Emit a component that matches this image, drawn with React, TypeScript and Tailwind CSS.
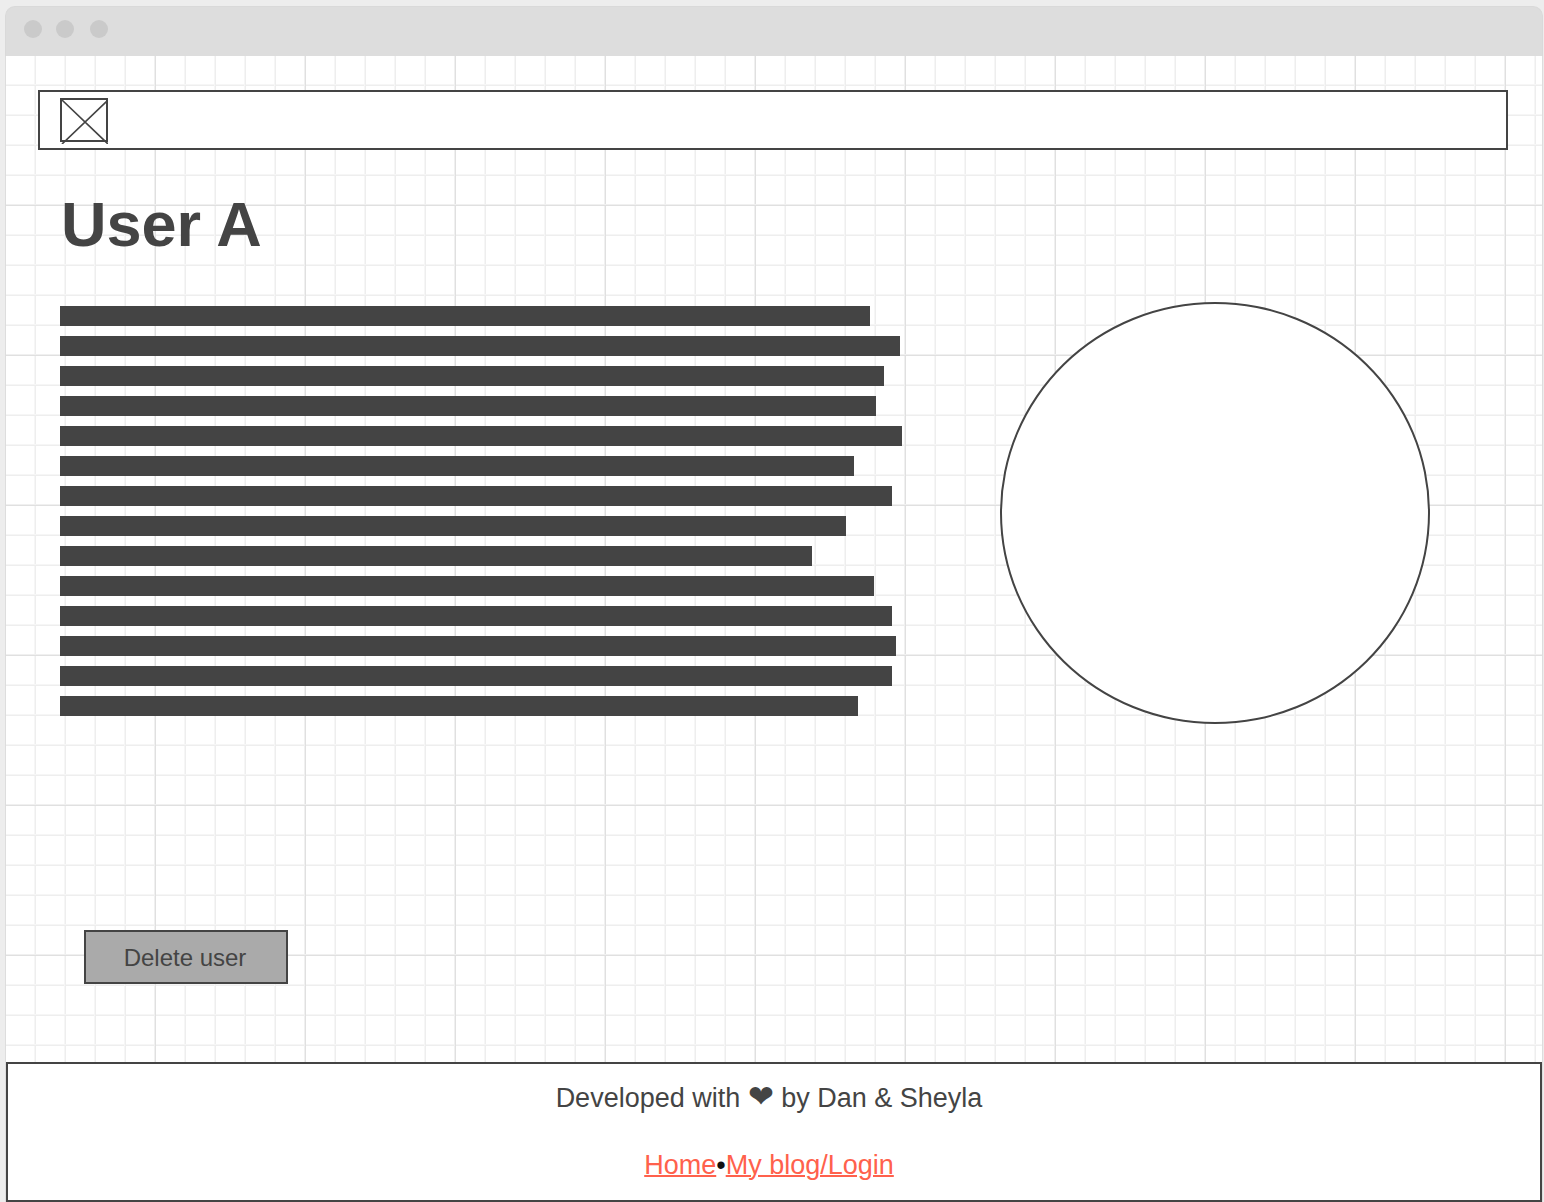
const bioLines = [810, 840, 824, 816, 842, 794, 832, 786, 752, 814, 832, 836, 832, 798];
const longestLine = Math.max(...bioLines);

function TitleBar() {
  return (
    <div className="flex h-[50px] items-start rounded-t-[10px] border border-b-0 border-[#d9d9d9] bg-[#ddd] pt-[13px] pl-[18px]">
      <span className="size-[18px] rounded-full bg-[#cacaca]" />
      <span className="ml-3.5 size-[18px] rounded-full bg-[#cacaca]" />
      <span className="ml-4 size-[18px] rounded-full bg-[#cacaca]" />
    </div>
  );
}

function GridPattern() {
  const minor = [28, 58, 88, 118];
  return (
    <svg className="absolute inset-0 size-full" aria-hidden="true" shapeRendering="crispEdges">
      <defs>
        <pattern id="grid" width="150" height="150" patternUnits="userSpaceOnUse">
          {minor.map((p) => (
            <g key={p}>
              <rect x={p} y="0" width="1" height="150" fill="#f6f6f6" />
              <rect x={p + 1} y="0" width="1" height="150" fill="#eee" />
              <rect x="0" y={p} width="150" height="1" fill="#f6f6f6" />
              <rect x="0" y={p + 1} width="150" height="1" fill="#eee" />
            </g>
          ))}
          <rect x="148" y="0" width="1" height="150" fill="#f0f0f0" />
          <rect x="149" y="0" width="1" height="150" fill="#e0e0e0" />
          <rect x="0" y="148" width="150" height="1" fill="#f0f0f0" />
          <rect x="0" y="149" width="150" height="1" fill="#e0e0e0" />
        </pattern>
      </defs>
      <rect width="100%" height="100%" fill="url(#grid)" />
    </svg>
  );
}

function Logo() {
  return (
    <svg width="48" height="46" viewBox="0 0 48 46" fill="none" stroke="#444" role="img" aria-label="Logo">
      <rect x="1" y="1" width="46" height="42" strokeWidth="2" />
      <path d="M2 2 48 46M48 2 2 46" strokeWidth="1.7" />
    </svg>
  );
}

export default function App() {
  return (
    <div className="min-h-screen bg-[#ededed] pt-1.5 pr-px pl-[5px] font-['Liberation_Sans',Arial,sans-serif] text-[#444]">
      <TitleBar />
      <div className="relative border-x border-[#ddd] bg-white">
        <GridPattern />
        <div className="relative">
          <main className="pt-[34px] pb-[78px]">
            <header className="mr-[34px] ml-8 flex h-[60px] border-2 border-[#444] bg-white pt-1.5 pl-5">
              <Logo />
            </header>
            <h1 className="mt-[38px] pl-[55px] text-[63px] leading-[72px] font-bold">User A</h1>
            <div className="mt-[42px] flex items-start gap-[98px] pr-28 pl-[54px]">
              <div className="flex flex-1 flex-col gap-2.5 pt-1">
                {bioLines.map((length, i) => (
                  <div key={i} className="h-5 bg-[#444]" style={{ width: `${(length / longestLine) * 100}%` }} />
                ))}
              </div>
              <div className="h-[422px] w-[430px] rounded-[50%] border-2 border-[#444] bg-white" />
            </div>
            <button className="mt-[206px] ml-[78px] block h-[54px] w-[204px] border-2 border-[#444] bg-[#aaa] pt-0.5 pr-0.5 text-2xl">
              Delete user
            </button>
          </main>
          <footer className="flex flex-col items-center gap-9 border-2 border-[#444] bg-white pt-[17px] pr-2.5 pb-[19px] text-[27px] leading-8">
            <p className="h-8">Developed with <span className="text-[31px] leading-none">❤</span> by Dan &amp; Sheyla</p>
            <nav className="text-[#111]">
              <a href="#home" className="text-[#ff614c] underline decoration-2">Home</a>•<a href="#blog" className="text-[#ff614c] underline decoration-2">My blog/Login</a>
            </nav>
          </footer>
        </div>
      </div>
    </div>
  );
}
